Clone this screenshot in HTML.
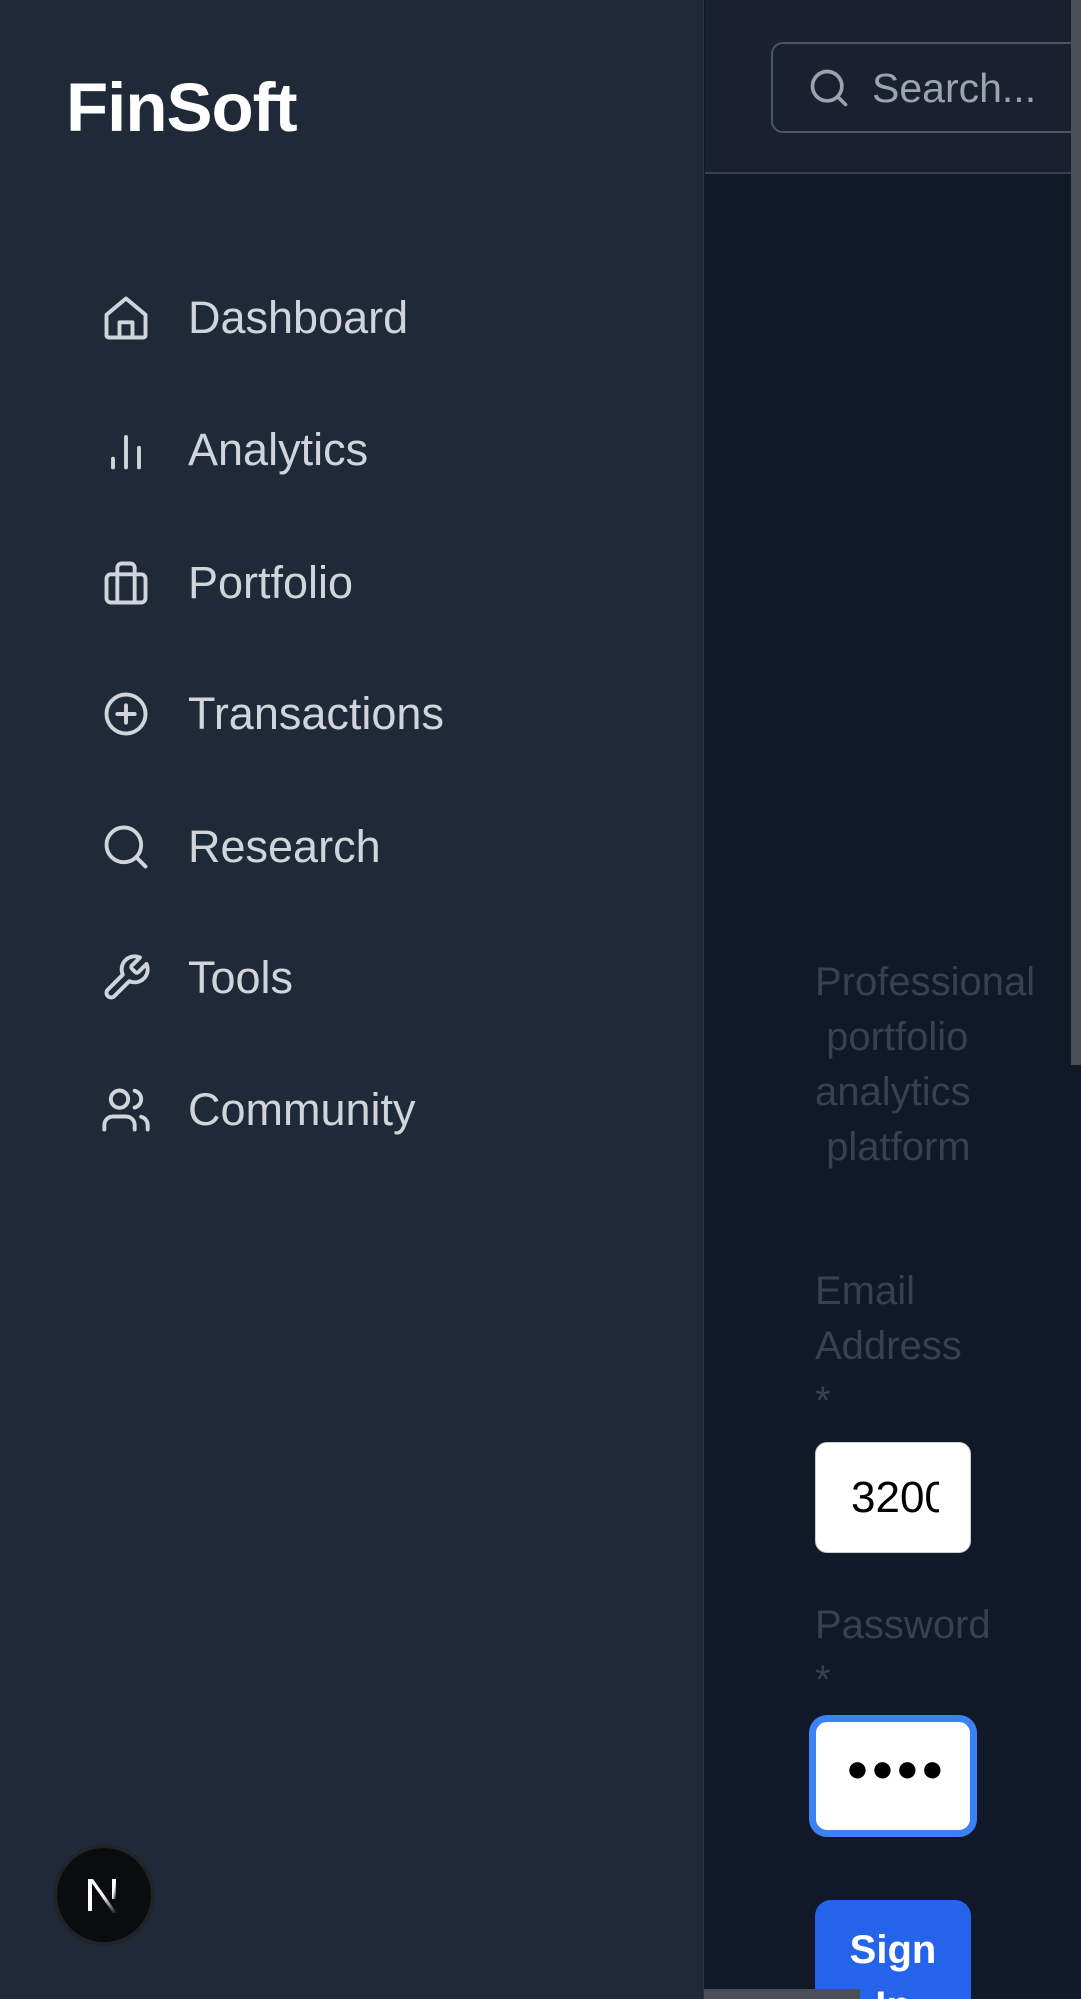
<!DOCTYPE html>
<html><head><meta charset="utf-8"><style>
*{margin:0;padding:0;box-sizing:border-box}
html,body{width:1081px;height:1999px;overflow:hidden;background:#111827;font-family:"Liberation Sans",Arial,sans-serif}
#wrap{position:relative;width:1081px;height:1999px;overflow:hidden}
.side{position:absolute;left:0;top:0;width:704px;height:1999px;background:#1f2937;border-right:1px solid #2b3441}
.logo{position:absolute;left:66px;top:68px;font-size:69px;font-weight:bold;color:#fff;letter-spacing:-1px}
.nav{position:absolute;left:100px;height:60px;display:flex;align-items:center;color:#d1d5db;font-size:45px}
.nav svg{width:52px;height:52px;margin-right:36px;flex:none}
.hdr{position:absolute;left:705px;top:0;width:376px;height:174px;background:#1a2030;border-bottom:2px solid #374151}
.search{position:absolute;left:771px;top:42px;width:330px;height:91px;border:2px solid #4b5563;border-radius:12px}
.search svg{position:absolute;left:34px;top:22px;width:44px;height:44px}
.search span{position:absolute;left:99px;top:21px;font-size:41px;color:#9ca3af}
.txt{position:absolute;left:815px;color:#374151;font-size:40px;line-height:55px;white-space:nowrap}
.box{position:absolute;background:#fff;border-radius:12px}
.sb{position:absolute;left:1071px;top:0;width:10px;height:1065px;background:#4b4f57}
.hsb{position:absolute;left:704px;top:1989px;width:156px;height:10px;background:#4b4f57}
</style></head><body><div id="wrap">
<div class="side">
<div class="logo">FinSoft</div>
<div class="nav" style="top:288px"><svg viewBox="0 0 24 24" fill="none" stroke="#d1d5db" stroke-width="1.8" stroke-linecap="round" stroke-linejoin="round"><path d="M3 10.5L12 3l9 7.5V20a1 1 0 0 1-1 1H4a1 1 0 0 1-1-1z"/><path d="M9 21v-7h6v7"/></svg>Dashboard</div>
<div class="nav" style="top:420px"><svg viewBox="0 0 24 24" fill="none" stroke="#d1d5db" stroke-width="1.8" stroke-linecap="round"><path d="M6 20v-4M12 20V6M18 20v-9"/></svg>Analytics</div>
<div class="nav" style="top:553px"><svg viewBox="0 0 24 24" fill="none" stroke="#d1d5db" stroke-width="1.8" stroke-linejoin="round"><rect x="3" y="8" width="18" height="13" rx="2"/><path d="M8 21V5a2 2 0 0 1 2-2h4a2 2 0 0 1 2 2v16"/></svg>Portfolio</div>
<div class="nav" style="top:684px"><svg viewBox="0 0 24 24" fill="none" stroke="#d1d5db" stroke-width="1.8" stroke-linecap="round"><circle cx="12" cy="12" r="9"/><path d="M12 8v8M8 12h8"/></svg>Transactions</div>
<div class="nav" style="top:817px"><svg viewBox="0 0 24 24" fill="none" stroke="#d1d5db" stroke-width="1.8" stroke-linecap="round"><circle cx="11" cy="11" r="8"/><path d="M21 21l-4.3-4.3"/></svg>Research</div>
<div class="nav" style="top:948px"><svg viewBox="0 0 24 24" fill="none" stroke="#d1d5db" stroke-width="1.8" stroke-linecap="round" stroke-linejoin="round"><path d="M14.7 6.3a1 1 0 0 0 0 1.4l1.6 1.6a1 1 0 0 0 1.4 0l3.770-3.77a6 6 0 0 1-7.94 7.94l-6.91 6.91a2.12 2.12 0 0 1-3-3l6.91-6.91a6 6 0 0 1 7.94-7.94z"/></svg>Tools</div>
<div class="nav" style="top:1080px"><svg viewBox="0 0 24 24" fill="none" stroke="#d1d5db" stroke-width="1.8" stroke-linecap="round"><path d="M16 21v-2a4 4 0 0 0-4-4H6a4 4 0 0 0-4 4v2"/><circle cx="9" cy="7" r="4"/><path d="M22 21v-2a4 4 0 0 0-3-3.870M16 3.13a4 4 0 0 1 0 7.75"/></svg>Community</div>
<div style="position:absolute;left:53px;top:1844px;width:102px;height:102px;border-radius:50%;background:#0a0c10;border:4px solid #222428"></div>
<svg style="position:absolute;left:86px;top:1877px" width="36" height="38" viewBox="0 0 36 38"><defs><linearGradient id="g" x1="0" y1="0" x2="1" y2="1"><stop offset="0.5" stop-color="#fff"/><stop offset="1" stop-color="#fff" stop-opacity="0"/></linearGradient></defs><rect x="2" y="2" width="4" height="32" fill="#fff"/><path d="M3 2h4l24 34h-4z" fill="url(#g)"/><rect x="26" y="2" width="4" height="20" fill="url(#g)"/></svg>
</div>
<div class="hdr"></div>
<div class="search"><svg viewBox="0 0 24 24" fill="none" stroke="#9ca3af" stroke-width="2" stroke-linecap="round"><circle cx="11" cy="11" r="8"/><path d="M21 21l-4.3-4.3"/></svg><span>Search...</span></div>
<div class="txt" style="top:955px;width:156px;text-align:left;">Professional<br>&nbsp;portfolio<br>analytics<br>&nbsp;platform</div>
<div class="txt" style="top:1264px">Email<br>Address<br>*</div>
<div class="box" style="left:815px;top:1442px;width:156px;height:111px;border:1px solid #ccc;overflow:hidden"><span style="position:absolute;left:35px;top:30px;font-size:44px;color:#000;white-space:nowrap;width:88px;overflow:hidden;display:block">3200</span></div>
<div class="txt" style="top:1598px">Password<br>*</div>
<div class="box" style="left:809px;top:1715px;width:168px;height:122px;border:7px solid #3b82f6;border-radius:18px"><span style="position:absolute;left:30px;top:26px;font-size:38px;color:#000;letter-spacing:2px">●●●●</span></div>
<div style="position:absolute;left:815px;top:1900px;width:156px;height:99px;overflow:hidden;background:#2563eb;border-radius:16px 16px 0 0;color:#fff;font-weight:bold;font-size:40px;text-align:center;line-height:56px;padding-top:22px">Sign<br>In</div>
<div class="sb"></div>
<div class="hsb"></div>
</div></body></html>
